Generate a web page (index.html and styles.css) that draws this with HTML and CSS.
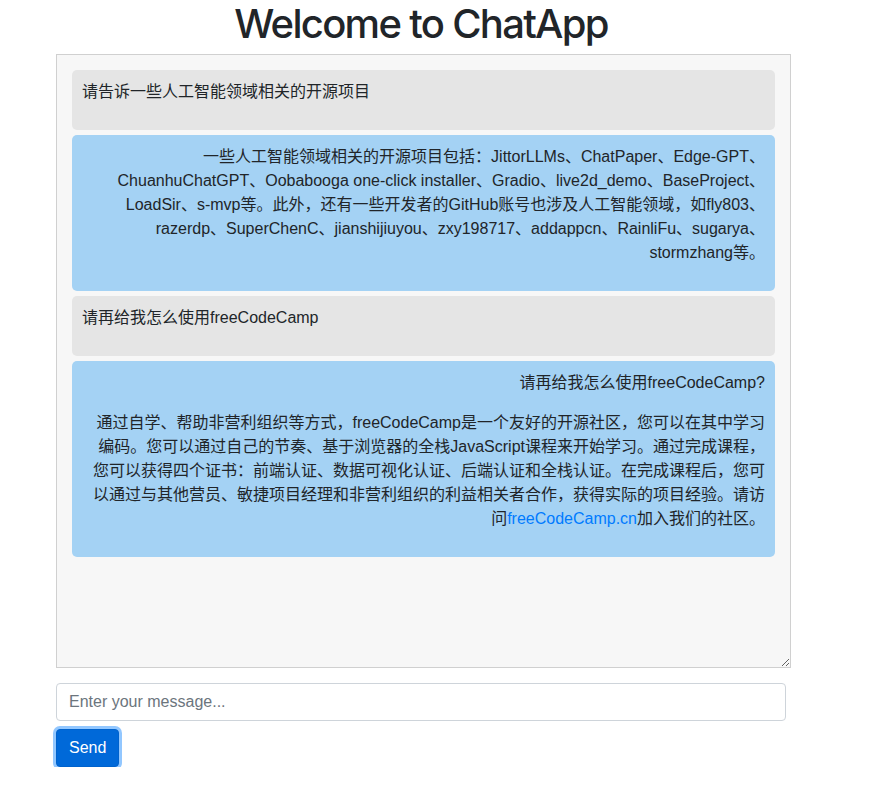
FILE: index.html
```html
<!DOCTYPE html>
<html lang="zh-CN">
<head>
<meta charset="utf-8">
<title>ChatApp</title>
<link rel="stylesheet" href="styles.css">
</head>
<body>
<div class="container">
  <h1 class="title">Welcome to ChatApp</h1>
  <div class="chat-box">
    <div class="msg msg-user"><p>请告诉一些人工智能领域相关的开源项目</p></div>
    <div class="msg msg-bot"><p>一些人工智能领域相关的开源项目包括：JittorLLMs、ChatPaper、Edge-GPT、<br>ChuanhuChatGPT、Oobabooga one-click installer、Gradio、live2d_demo、BaseProject、<br>LoadSir、s-mvp等。此外，还有一些开发者的GitHub账号也涉及人工智能领域，如fly803、<br>razerdp、SuperChenC、jianshijiuyou、zxy198717、addappcn、RainliFu、sugarya、<br>stormzhang等。</p></div>
    <div class="msg msg-user"><p>请再给我怎么使用freeCodeCamp</p></div>
    <div class="msg msg-bot"><p>请再给我怎么使用freeCodeCamp?</p><p>通过自学、帮助非营利组织等方式，freeCodeCamp是一个友好的开源社区，您可以在其中学习<br> 编码。您可以通过自己的节奏、基于浏览器的全栈JavaScript课程来开始学习。通过完成课程，<br>您可以获得四个证书：前端认证、数据可视化认证、后端认证和全栈认证。在完成课程后，您可<br>以通过与其他营员、敏捷项目经理和非营利组织的利益相关者合作，获得实际的项目经验。请访<br>问<a href="#">freeCodeCamp.cn</a>加入我们的社区。</p></div>
  </div>
  <form class="chat-form">
    <input class="msg-input" type="text" placeholder="Enter your message...">
    <button class="send-btn" type="button">Send</button>
  </form>
</div>
</body>
</html>
```
FILE: styles.css
```css
html, body {
  margin: 0;
  padding: 0;
  background: #ffffff;
}
body {
  font-family: "Liberation Sans", "Noto Sans CJK SC", sans-serif;
  font-size: 16px;
  line-height: 1.5;
  color: #212529;
}
.container {
  width: 730px;
  margin-left: 56px;
}
.title {
  margin: 0 0 6px;
  font-family: Inter, "Liberation Sans", sans-serif;
  font-weight: 500;
  font-size: 40px;
  line-height: 48px;
  letter-spacing: -1.7px;
  text-align: center;
  color: #212529;
}
.chat-box {
  box-sizing: border-box;
  width: 735px;
  height: 614px;
  padding: 15px;
  background: #f7f7f7;
  border: 1px solid #d0d0d0;
  overflow: auto;
  resize: both;
}
.msg {
  padding: 10px;
  margin-bottom: 5px;
  border-radius: 5px;
}
.msg p {
  margin: 0 0 16px;
  white-space: nowrap;
}
.msg-user {
  background: #e5e5e5;
  text-align: left;
}
.msg-bot {
  background: #a4d2f4;
  text-align: right;
}
.msg a {
  color: #007bff;
  text-decoration: none;
}
.chat-form {
  margin-top: 15px;
}
.msg-input {
  display: block;
  box-sizing: border-box;
  width: 730px;
  height: 38px;
  padding: 6px 12px;
  font-family: "Liberation Sans", sans-serif;
  font-size: 16px;
  color: #495057;
  background: #fff;
  border: 1px solid #ced4da;
  border-radius: 4px;
  outline: none;
}
.msg-input::placeholder {
  color: #6c757d;
}
.send-btn {
  display: block;
  margin-top: 8px;
  box-sizing: border-box;
  height: 38px;
  padding: 6px 12px;
  font-family: "Liberation Sans", sans-serif;
  font-size: 16px;
  line-height: 24px;
  color: #fff;
  background: #0069d9;
  border: 1px solid #0062cc;
  border-radius: 4px;
  box-shadow: 0 0 0 3px rgba(38, 143, 255, 0.5);
}
```
